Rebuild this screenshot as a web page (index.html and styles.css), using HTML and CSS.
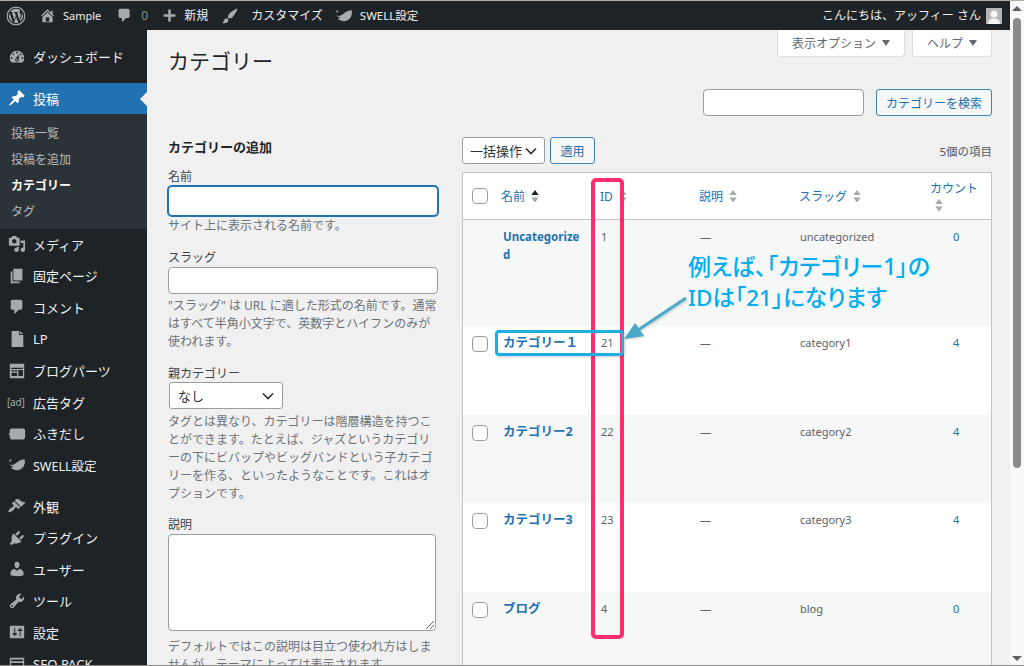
FILE: index.html
```html
<!DOCTYPE html>
<html lang="ja">
<head>
<meta charset="utf-8">
<title>カテゴリー</title>
<link rel="stylesheet" href="styles.css">
</head>
<body>
<svg class="defs" width="0" height="0" aria-hidden="true">
  <symbol id="i-wp" viewBox="0 0 20 20"><path fill-rule="evenodd" d="M10 .6a9.4 9.4 0 1 1 0 18.8A9.4 9.4 0 0 1 10 .6zm0 1.1a8.3 8.3 0 1 0 0 16.6 8.3 8.3 0 0 0 0-16.6z"/><path d="M2.9 10c0 2.8 1.6 5.2 4 6.4L3.500 7.100A7.100 7.100 0 0 0 2.900 10zM14.800 9.600c0-.9-.3-1.500-.6-2-.4-.6-.7-1.100-.7-1.700 0-.7.5-1.300 1.200-1.300h.1A7.100 7.100 0 0 0 4.100 6c.2 0 .4 0 .7 0 .7 0 1.900-.1 1.900-.1.400 0 .4.500 0 .6 0 0-.4 0-.8.100l2.500 7.500 1.500-4.500-1.100-2.900c-.4 0-.7-.1-.7-.1-.4 0-.3-.6 0-.6 0 0 1.100.1 1.800.1.700 0 1.900-.1 1.900-.1.400 0 .4.500 0 .6 0 0-.4 0-.8.100l2.500 7.400.7-2.300c.3-.9.600-1.600.600-2.200zM10.100 10.700l-2.100 6.100a7.100 7.100 0 0 0 4.400-.1l-.1-.1zM16.200 6.700c0 .2 0 .5 0 .7 0 .7-.1 1.500-.5 2.500l-2.200 6.200a7.100 7.100 0 0 0 2.700-9.400z"/></symbol>
  <symbol id="i-home" viewBox="0 0 20 20"><path d="M16 8.500l1.530 1.530-1.060 1.060L10 4.620l-6.470 6.470-1.060-1.060L10 2.500l4 4v-2h2v4zm-6-2.460l6 5.990V18H4v-5.970zM12 17v-5H8v5h4z"/></symbol>
  <symbol id="i-comment" viewBox="0 0 20 20"><path d="M5 2h9c1.100 0 2 .9 2 2v7c0 1.100-.9 2-2 2h-2l-5 5v-5H5c-1.100 0-2-.9-2-2V4c0-1.100.9-2 2-2z"/></symbol>
  <symbol id="i-plus" viewBox="0 0 20 20"><path d="M17 8.500v3h-5.500V17h-3v-5.500H3v-3h5.500V3h3v5.500z"/></symbol>
  <symbol id="i-brush" viewBox="0 0 20 20"><path d="M18.330 3.570s.27-.8-.31-1.360c-.53-.52-1.220-.24-1.220-.24-.61.3-5.760 3.470-7.670 5.570-.86.96-2.060 3.790-1.090 4.820.92.98 3.960-.17 4.790-1 2.060-2.060 5.210-7.840 5.500-8.790zM1.400 17.650c2.370-1.560 1.460-3.410 3.230-4.640.93-.65 2.220-.62 3.080.29.63.67.8 2.570-.16 3.460-1.570 1.450-4 1.550-6.150.89z"/></symbol>
  <symbol id="i-swell" viewBox="0 0 20 20"><path d="M1.500 9c1.700 1.200 3.500 1.200 5.300.3C9.800 7.700 12.800 3.600 18.500 3.500c1 4.500-.5 9-4.500 11.200-3.700 2-8.300 1.100-11-2 1.500.1 2.600-.2 3.100-.9C4 11.500 2.300 10.500 1.500 9z"/><circle cx="2.500" cy="5" r="1.200"/></symbol>
  <symbol id="i-dash" viewBox="0 0 20 20"><path d="M3.760 16h12.480c1.100-1.370 1.760-3.110 1.760-5 0-4.420-3.580-8-8-8s-8 3.580-8 8c0 1.890.66 3.630 1.760 5zM10 4c.55 0 1 .45 1 1s-.45 1-1 1-1-.45-1-1 .45-1 1-1zM6 6c.55 0 1 .45 1 1s-.45 1-1 1-1-.45-1-1 .45-1 1-1zm8 0c.55 0 1 .45 1 1s-.45 1-1 1-1-.45-1-1 .45-1 1-1zm-5.370 5.550L12 7v6c0 1.100-.9 2-2 2s-2-.9-2-2c0-.57.24-1.080.63-1.450zM4 10c.55 0 1 .45 1 1s-.45 1-1 1-1-.45-1-1 .45-1 1-1zm12 0c.55 0 1 .45 1 1s-.45 1-1 1-1-.45-1-1 .45-1 1-1zm-5 3c0-.55-.45-1-1-1s-1 .45-1 1 .45 1 1 1 1-.45 1-1z"/></symbol>
  <symbol id="i-pin" viewBox="0 0 20 20"><path d="M10.440 3.020l1.820-1.820 6.360 6.350-1.830 1.820c-1.050-.68-2.480-.57-3.410.36l-.75.75c-.92.93-1.040 2.350-.35 3.410l-1.830 1.820-2.410-2.410-2.800 2.790c-.42.42-3.380 2.710-3.800 2.290s1.860-3.390 2.280-3.810l2.790-2.790L4.100 9.360l1.830-1.820c1.050.69 2.480.57 3.400-.36l.75-.75c.93-.92 1.050-2.350.36-3.410z"/></symbol>
  <symbol id="i-media" viewBox="0 0 20 20"><path d="M13 11V4c0-.55-.45-1-1-1h-1.670L9 1H5L3.670 3H2c-.55 0-1 .45-1 1v7c0 .55.45 1 1 1h10c.55 0 1-.45 1-1zM7 4.500c1.380 0 2.500 1.120 2.500 2.500S8.380 9.500 7 9.500 4.500 8.380 4.500 7 5.620 4.500 7 4.500zM14 6h5v10.500c0 1.380-1.120 2.500-2.500 2.500S14 17.880 14 16.500s1.120-2.500 2.500-2.500c.17 0 .34.02.5.05V9h-3V6zm-4 8.050V13h2v3.500c0 1.380-1.120 2.500-2.500 2.500S7 17.880 7 16.500 8.120 14 9.500 14c.17 0 .34.020.5.050z"/></symbol>
  <symbol id="i-page" viewBox="0 0 20 20"><path d="M6 15V2h10v13H6zm-1 1h8v2H3V5h2v11z"/></symbol>
  <symbol id="i-lp" viewBox="0 0 20 20"><path d="M4 1h8.500v4.500H17V19H4zM13.500 1.200l3.300 3.300h-3.300z"/></symbol>
  <symbol id="i-blocks" viewBox="0 0 20 20"><path fill-rule="evenodd" d="M2 2h16v16H2zM3.500 6.500v1.200h13V6.500zM4 9v1.500h2.500V9zM7.500 9v1.500H10V9zM11.500 9v6.500h5V9zM4 12v3.500h6V12z"/></symbol>
  <symbol id="i-bubble" viewBox="0 0 20 20"><path d="M4 4h13c1.100 0 2 .9 2 2v8c0 1.100-.9 2-2 2H4c-1.100 0-2-.9-2-2v-2.500L.5 10 2 8.500V6c0-1.100.9-2 2-2z"/></symbol>
  <symbol id="i-brush2" viewBox="0 0 20 20"><path d="M14.480 11.060L7.410 3.990l1.500-1.500c.5-.56 2.300-.47 3.510.32 1.210.8 1.430 1.280 2.910 2.100 1.180.64 2.450 1.260 4.450.85zm-.71.71L6.700 4.700 4.930 6.470c-.39.39-.39 1.020 0 1.410l1.060 1.060c.39.39.39 1.030 0 1.420-.6.6-1.430 1.110-2.210 1.690-.35.26-.7.53-1.010.84C1.430 13.230 0 16.040.78 16.820c.78.78 3.590-.65 4.930-1.990.31-.31.58-.66.84-1.010.58-.78 1.090-1.610 1.690-2.210.39-.39 1.020-.39 1.410 0l1.060 1.060c.39.39 1.020.39 1.410 0z"/></symbol>
  <symbol id="i-plug" viewBox="0 0 20 20"><path d="M13.110 4.360L9.870 7.600 8 5.730l3.240-3.240c.35-.34 1.050-.2 1.560.32.52.51.66 1.210.31 1.550zm-8 1.770l.91-1.120 9.010 9.010-1.190.84c-.71.71-2.630 1.160-3.820 1.160H6.140L4.900 17.260c-.59.59-1.540.59-2.120 0-.59-.58-.59-1.530 0-2.120l1.240-1.240v-3.880c0-1.130.4-3.190 1.090-3.890zm7.260 3.970l3.240-3.240c.34-.35 1.040-.21 1.550.31.52.51.66 1.210.31 1.550l-3.240 3.250z"/></symbol>
  <symbol id="i-user" viewBox="0 0 20 20"><path d="M10 9.250c-2.270 0-2.730-3.440-2.730-3.440C7 4.020 7.820 2 9.970 2c2.160 0 2.980 2.020 2.710 3.810 0 0-.41 3.440-2.680 3.440zm0 2.570L12.720 10c2.390 0 4.520 2.330 4.520 4.530v2.490s-3.650 1.130-7.240 1.130c-3.650 0-7.240-1.130-7.240-1.130v-2.490c0-2.250 1.940-4.480 4.470-4.480z"/></symbol>
  <symbol id="i-tool" viewBox="0 0 20 20"><path d="M16.680 9.770c-1.340 1.340-3.300 1.670-4.950.99l-5.410 6.520c-.99.99-2.590.99-3.580 0s-.99-2.590 0-3.570l6.520-5.420c-.68-1.650-.35-3.610.99-4.950 1.280-1.280 3.120-1.620 4.720-1.060l-2.890 2.890 2.820 2.820 2.860-2.870c.53 1.580.18 3.390-1.080 4.650zM3.810 16.210c.4.39 1.040.39 1.430 0 .4-.4.4-1.040 0-1.430-.39-.4-1.030-.4-1.430 0-.39.39-.39 1.030 0 1.430z"/></symbol>
  <symbol id="i-set" viewBox="0 0 20 20"><path d="M18 16V4c0-.55-.45-1-1-1H3c-.55 0-1 .45-1 1v12c0 .55.45 1 1 1h14c.55 0 1-.45 1-1zM8 11h1c.55 0 1 .45 1 1s-.45 1-1 1H8v1.500c0 .28-.22.5-.5.5s-.5-.22-.5-.5V13H6c-.55 0-1-.45-1-1s.45-1 1-1h1V5.500c0-.28.22-.5.5-.5s.5.22.5.5V11zm5-2h-1c-.55 0-1-.45-1-1s.45-1 1-1h1V5.500c0-.28.22-.5.5-.5s.5.22.5.5V7h1c.55 0 1 .45 1 1s-.45 1-1 1h-1v5.500c0 .28-.22.5-.5.5s-.5-.22-.5-.5V9z"/></symbol>
  <symbol id="i-list" viewBox="0 0 20 20"><path fill-rule="evenodd" d="M2 3h16v14H2zM3.500 5v2h13V5zM3.500 9v2h13V9zM3.500 13v2h13v-2z"/></symbol>
  <symbol id="i-sort" viewBox="0 0 8 14"><path d="M4 0l4 5.500H0z"/><path d="M0 8h8l-4 5.500z"/></symbol>
  <symbol id="i-sort-on" viewBox="0 0 8 14"><path class="sort-up" d="M4 0l4 5.500H0z"/><path d="M0 8h8l-4 5.500z"/></symbol>
  <symbol id="i-chev" viewBox="0 0 12 8"><path d="M1 1.500l5 5 5-5" fill="none" stroke="currentColor" stroke-width="1.700"/></symbol>
</svg>

<div class="window">
  <div class="main">
    <header class="adminbar">
      <div class="ab-group">
        <svg class="ab-icon ab-wp"><use href="#i-wp"/></svg>
        <span class="ab-item ab-home"><svg class="ab-icon ab-s17"><use href="#i-home"/></svg><span class="ab-site">Sample</span></span>
        <span class="ab-item ab-comments"><svg class="ab-icon ab-s17"><use href="#i-comment"/></svg><span class="ab-dim">0</span></span>
        <span class="ab-item ab-new"><svg class="ab-icon ab-s17"><use href="#i-plus"/></svg>新規</span>
        <span class="ab-item ab-custom"><svg class="ab-icon ab-s18"><use href="#i-brush"/></svg>カスタマイズ</span>
        <span class="ab-item ab-swell"><svg class="ab-icon ab-s18"><use href="#i-swell"/></svg>SWELL設定</span>
      </div>
      <div class="ab-user">こんにちは、アッフィー さん<span class="avatar"><svg viewBox="0 0 16 16"><circle cx="8" cy="6" r="3.500"/><path d="M2 16c0-4 2.500-5.500 6-5.500s6 1.500 6 5.500z"/></svg></span></div>
    </header>

    <div class="frame">
      <nav class="sidebar">
        <a class="menu menu-dash"><svg class="m-icon"><use href="#i-dash"/></svg>ダッシュボード</a>
        <a class="menu menu-active"><svg class="m-icon"><use href="#i-pin"/></svg>投稿</a>
        <ul class="submenu">
          <li>投稿一覧</li>
          <li>投稿を追加</li>
          <li class="current">カテゴリー</li>
          <li>タグ</li>
        </ul>
        <a class="menu"><svg class="m-icon"><use href="#i-media"/></svg>メディア</a>
        <a class="menu"><svg class="m-icon"><use href="#i-page"/></svg>固定ページ</a>
        <a class="menu"><svg class="m-icon"><use href="#i-comment"/></svg>コメント</a>
        <a class="menu"><svg class="m-icon"><use href="#i-lp"/></svg>LP</a>
        <a class="menu"><svg class="m-icon"><use href="#i-blocks"/></svg>ブログパーツ</a>
        <a class="menu"><span class="m-ad">[ad]</span>広告タグ</a>
        <a class="menu"><svg class="m-icon"><use href="#i-bubble"/></svg>ふきだし</a>
        <a class="menu menu-latin"><svg class="m-icon"><use href="#i-swell"/></svg>SWELL設定</a>
        <a class="menu menu-sep"><svg class="m-icon"><use href="#i-brush2"/></svg>外観</a>
        <a class="menu"><svg class="m-icon"><use href="#i-plug"/></svg>プラグイン</a>
        <a class="menu"><svg class="m-icon"><use href="#i-user"/></svg>ユーザー</a>
        <a class="menu"><svg class="m-icon"><use href="#i-tool"/></svg>ツール</a>
        <a class="menu"><svg class="m-icon"><use href="#i-set"/></svg>設定</a>
        <a class="menu"><svg class="m-icon"><use href="#i-list"/></svg>SEO PACK</a>
      </nav>

      <main class="content">
        <div class="top">
          <h1>カテゴリー</h1>
          <div class="meta">
            <button class="meta-btn meta-opt">表示オプション<i class="tri"></i></button>
            <button class="meta-btn meta-help">ヘルプ<i class="tri"></i></button>
          </div>
        </div>
        <div class="search">
          <input class="search-input" type="text">
          <button class="btn btn-search">カテゴリーを検索</button>
        </div>
        <div class="cols">
          <section class="col-form">
            <h2>カテゴリーの追加</h2>
            <label class="lab lab-first">名前</label>
            <input class="inp inp-focus" type="text">
            <p class="hint hint-tight">サイト上に表示される名前です。</p>
            <label class="lab lab-next">スラッグ</label>
            <input class="inp" type="text">
            <p class="hint">"スラッグ" は URL に適した形式の名前です。通常<br>はすべて半角小文字で、英数字とハイフンのみが<br>使われます。</p>
            <label class="lab lab-next lab-parent">親カテゴリー</label>
            <div class="selectbox sel-parent"><span>なし</span><svg class="chev"><use href="#i-chev"/></svg></div>
            <p class="hint hint-parent">タグとは異なり、カテゴリーは階層構造を持つこ<br>とができます。たとえば、ジャズというカテゴリ<br>ーの下にビバップやビッグバンドという子カテゴ<br>リーを作る、といったようなことです。これはオ<br>プションです。</p>
            <label class="lab lab-desc">説明</label>
            <div class="textarea"><svg class="grip" viewBox="0 0 8 8"><path d="M0 8L8 0M4 8l4-4" fill="none" stroke="#666" stroke-width="1"/></svg></div>
            <p class="hint hint-last">デフォルトではこの説明は目立つ使われ方はしま<br>せんが、テーマによっては表示されます。</p>
          </section>

          <section class="col-table">
            <div class="tablenav">
              <div class="selectbox sel-bulk"><span>一括操作</span><svg class="chev"><use href="#i-chev"/></svg></div>
              <button class="btn btn-apply">適用</button>
              <span class="total">5個の項目</span>
            </div>
            <table class="cats">
              <colgroup><col class="c-cb"><col class="c-name"><col class="c-id"><col class="c-desc"><col class="c-slug"><col class="c-count"></colgroup>
              <thead>
                <tr>
                  <th class="cb"><i class="check"></i></th>
                  <th><a>名前</a><svg class="sort sort-on"><use href="#i-sort-on"/></svg></th>
                  <th><a>ID</a><svg class="sort"><use href="#i-sort"/></svg></th>
                  <th><a>説明</a><svg class="sort"><use href="#i-sort"/></svg></th>
                  <th><a>スラッグ</a><svg class="sort"><use href="#i-sort"/></svg></th>
                  <th class="th-count"><a>カウント</a><svg class="sort sort-block"><use href="#i-sort"/></svg></th>
                </tr>
              </thead>
              <tbody>
                <tr class="alt tall">
                  <td class="cb"></td><td class="name name-latin"><a>Uncategorized</a></td><td>1</td><td>—</td><td>uncategorized</td><td class="num"><a>0</a></td>
                </tr>
                <tr class="r2">
                  <td class="cb"><i class="check"></i></td><td class="name"><a>カテゴリー１</a></td><td>21</td><td>—</td><td>category1</td><td class="num"><a>4</a></td>
                </tr>
                <tr class="alt r3">
                  <td class="cb"><i class="check"></i></td><td class="name"><a>カテゴリー2</a></td><td>22</td><td>—</td><td>category2</td><td class="num"><a>4</a></td>
                </tr>
                <tr class="r4">
                  <td class="cb"><i class="check"></i></td><td class="name"><a>カテゴリー3</a></td><td>23</td><td>—</td><td>category3</td><td class="num"><a>4</a></td>
                </tr>
                <tr class="alt r5">
                  <td class="cb"><i class="check"></i></td><td class="name"><a>ブログ</a></td><td>4</td><td>—</td><td>blog</td><td class="num"><a>0</a></td>
                </tr>
              </tbody>
            </table>
          </section>
        </div>
      </main>
    </div>
  </div>
  <aside class="scrollbar">
    <i class="sb-up"></i>
    <i class="sb-thumb"></i>
    <i class="sb-down"></i>
  </aside>

  <div class="note note-pink"></div>
  <div class="note note-blue"></div>
  <svg class="note note-arrow" viewBox="0 0 80 60"><path d="M66 14L18 46" fill="none" stroke="#4aa8c8" stroke-width="3"/><path d="M4 55l20-3-9-13z" fill="#4aa8c8"/></svg>
  <div class="note note-text">例えば、「カテゴリー1」の<br><span class="note-line2">IDは「21」になります</span></div>
</div>
</body>
</html>
```

FILE: styles.css
```css
* { box-sizing: border-box; }
html, body { margin: 0; padding: 0; height: 100%; overflow: hidden; background: #f0f0f1; }
body { font-family: "Noto Sans", "Noto Sans CJK JP", sans-serif; font-size: 12px; color: #3c434a; }
.defs { position: absolute; }
button, input { font-family: inherit; }

.window { position: relative; display: flex; height: 666px; border-top: 1px solid #b8aaa2; border-bottom: 1px solid #8a8a8a; overflow: hidden; }
.main { flex: 1; min-width: 0; display: flex; flex-direction: column; }

/* admin bar */
.adminbar { flex: none; height: 29px; background: #1d2327; color: #f0f0f1; display: flex; justify-content: space-between; align-items: center; padding: 0 8px 0 6px; line-height: 1; }
.ab-group { display: flex; align-items: center; }
.ab-item { display: flex; align-items: center; }
.ab-icon { fill: #a7aaad; flex: none; }
.ab-wp { width: 20px; height: 20px; margin-right: 13px; }
.ab-s17 { width: 17px; height: 17px; margin-right: 6px; }
.ab-s18 { width: 18px; height: 18px; margin-right: 12px; }
.ab-site { font-size: 11px; margin-left: 1px; }
.ab-home { margin-right: 15px; }
.ab-comments { margin-right: 13px; }
.ab-dim { color: #8c8f94; margin-left: 2px; }
.ab-new { margin-right: 13px; }
.ab-custom { margin-right: 12px; }
.ab-swell { font-size: 11.500px; }
.ab-swell .ab-icon { margin-right: 7px; }
.ab-user { display: flex; align-items: center; gap: 5px; }
.avatar { width: 16px; height: 16px; background: #b5b5b5; display: block; }
.avatar svg { display: block; width: 16px; height: 16px; fill: #f4f4f4; }

.frame { flex: 1; display: flex; min-height: 0; }

/* sidebar */
.sidebar { flex: none; width: 147px; background: #1d2327; padding-top: 11px; color: #f0f0f1; font-size: 13px; }
.menu { display: flex; align-items: center; height: 31.550px; padding-left: 8px; gap: 7px; white-space: nowrap; }
.m-icon { width: 18px; height: 18px; fill: #a7aaad; flex: none; }
.m-ad { width: 18px; flex: none; font-size: 10px; color: #a7aaad; letter-spacing: -.2px; margin-left: -1px; margin-right: 1px; white-space: nowrap; }
.menu-dash { margin-bottom: 10px; }
.menu-active { position: relative; height: 31px; background: #2271b1; color: #fff; }
.menu-active .m-icon { fill: #fff; }
.menu-active::after { content: ""; position: absolute; right: 0; top: 9px; border: 7px solid transparent; border-right-color: #f0f0f1; border-left-width: 0; }
.submenu { list-style: none; margin: 0; padding: 7px 0 4px 11px; background: #2c3338; color: #b4b9be; }
.submenu li { height: 26px; line-height: 26px; font-size: 12px; }
.submenu .current { color: #fff; font-weight: 700; }
.menu-latin { font-size: 12.500px; }
.menu-sep { margin-top: 9.500px; }

/* content */
.content { flex: 1; min-width: 0; padding: 0 18px 0 21px; }
.top { display: flex; justify-content: space-between; align-items: flex-start; height: 59px; }
h1 { margin: 0; padding-top: 17px; font-size: 21px; line-height: 29px; font-weight: 400; color: #1d2327; }
.meta { display: flex; gap: 7px; }
.meta-btn { height: 27px; background: #fff; border: 1px solid #dcdcde; border-top: 0; border-radius: 0 0 4px 4px; color: #646970; font-size: 12px; padding: 0; display: flex; align-items: center; justify-content: center; gap: 6px; }
.meta-opt { width: 128px; }
.meta-help { width: 80px; }
.tri { border: 4px solid transparent; border-top: 6px solid #646970; border-bottom: 0; }
.search { display: flex; justify-content: flex-end; gap: 12px; height: 27px; }
.search-input { width: 161px; height: 27px; background: #fff; border: 1px solid #9a9da1; border-radius: 4px; }
.btn { height: 27px; background: #f6f7f7; border: 1px solid #3d83bb; border-radius: 3px; color: #2271b1; font-size: 12px; padding: 0; }
.btn-search { width: 116px; }
.cols { display: flex; gap: 24px; margin-top: 21px; }

/* form column */
.col-form { flex: none; width: 270px; padding-top: 1px; }
h2 { margin: 0; font-size: 13px; line-height: 18px; font-weight: 700; color: #1d2327; }
.lab { display: block; line-height: 18px; font-size: 12px; color: #3c434a; }
.lab-first { margin-top: 12px; }
.lab-next { margin-top: 14px; }
.lab-parent { height: 17px; }
.lab-desc { margin-top: 13px; }
.inp { display: block; width: 270px; height: 27px; background: #fff; border: 1px solid #9a9da1; border-radius: 4px; }
.inp-focus { height: 30px; border-color: #2271b1; box-shadow: 0 0 0 1px #2271b1; }
.hint { margin: 3px 0 0; font-size: 12px; line-height: 18px; color: #6c7177; white-space: nowrap; }
.hint-tight { margin-top: 1px; }
.hint-parent { margin-top: 4px; }
.selectbox { display: flex; justify-content: space-between; align-items: center; height: 27px; background: #fff; border: 1px solid #9a9da1; border-radius: 3px; color: #2c3338; font-size: 13px; }
.sel-parent { width: 114px; margin-left: 1px; padding: 0 8px; }
.sel-bulk { width: 83px; padding: 0 7px; }
.chev { width: 12px; height: 8px; color: #2c3338; flex: none; }
.textarea { position: relative; width: 268px; height: 97px; background: #fff; border: 1px solid #9a9da1; border-radius: 4px; }
.grip { position: absolute; right: 1px; bottom: 1px; width: 8px; height: 8px; }
.hint-last { margin-top: 7px; }

/* table column */
.col-table { flex: none; width: 530px; }
.tablenav { display: flex; align-items: center; gap: 5px; height: 27px; }
.btn-apply { width: 45px; height: 27px; font-size: 12px; }
.total { margin-left: auto; font-size: 11.500px; color: #50575e; }
.cats { width: 530px; margin-top: 8px; table-layout: fixed; border-collapse: separate; border-spacing: 0; background: #fff; border: 1px solid #c3c4c7; border-bottom: 0; font-size: 11px; color: #5c6268; }
.c-cb { width: 30px; }
.c-name { width: 99px; }
.c-id { width: 99px; }
.c-desc { width: 100px; }
.c-slug { width: 131px; }
.c-count { width: 69px; }
th { height: 47px; padding: 0 8px; text-align: left; font-weight: 400; font-size: 12px; color: #2271b1; border-bottom: 1px solid #c3c4c7; vertical-align: middle; }
th a { color: #2271b1; }
th.cb { padding: 0 0 0 9px; }
.check { display: block; width: 16px; height: 16px; background: #fff; border: 1px solid #9a9da1; border-radius: 4px; }
.sort { width: 8px; height: 13px; margin-left: 6px; fill: #a7aaad; vertical-align: -2px; }
.sort-up { fill: #1d2327; }
.sort-block { display: block; margin: 2px 0 0 5px; }
.th-count { line-height: 17px; }
td { padding: 8px 8px 0 9px; line-height: 18px; vertical-align: top; }
td.cb { padding: 10px 0 0 9px; }
td.name { padding: 8px 8px 0 10px; font-size: 12.500px; font-weight: 700; word-break: break-all; }
td.name-latin { font-size: 11.500px; }
td a { color: #2271b1; }
.num { padding-left: 31px; }
.alt td { background: #f6f7f7; }
.tall td { height: 106px; }
.r2 td { height: 89px; }
.r3 td { height: 88px; }
.r4 td { height: 89px; }
.r5 td { height: 120px; }

/* scrollbar */
.scrollbar { flex: none; width: 14px; background: #f8f9f8; display: flex; flex-direction: column; align-items: center; padding-top: 5px; }
.sb-up { border: 5px solid transparent; border-bottom: 5px solid #606060; border-top: 0; margin-bottom: 7px; }
.sb-thumb { width: 8px; height: 450px; background: #8b8b8b; border-radius: 4px; }
.sb-down { margin-top: auto; margin-bottom: 4px; border: 5px solid transparent; border-top: 5px solid #606060; border-bottom: 0; }

/* annotations */
.note { position: absolute; }
.note-pink { left: 591px; top: 177px; width: 33px; height: 461px; border: 4px solid #ff2d6f; border-radius: 5px; }
.note-blue { left: 495px; top: 329px; width: 129px; height: 26px; border: 3px solid #1eaee4; border-radius: 4px; box-shadow: 1px 1px 3px rgba(0,0,0,.2); }
.note-arrow { left: 620px; top: 283px; width: 80px; height: 60px; filter: drop-shadow(1px 1px 1px rgba(0,0,0,.2)); }
.note-text { left: 688px; top: 250px; font-size: 23px; line-height: 31px; color: #00aeef; font-weight: 500; white-space: nowrap; font-feature-settings: "palt"; }
.note-line2 { font-size: 22.500px; }
```
